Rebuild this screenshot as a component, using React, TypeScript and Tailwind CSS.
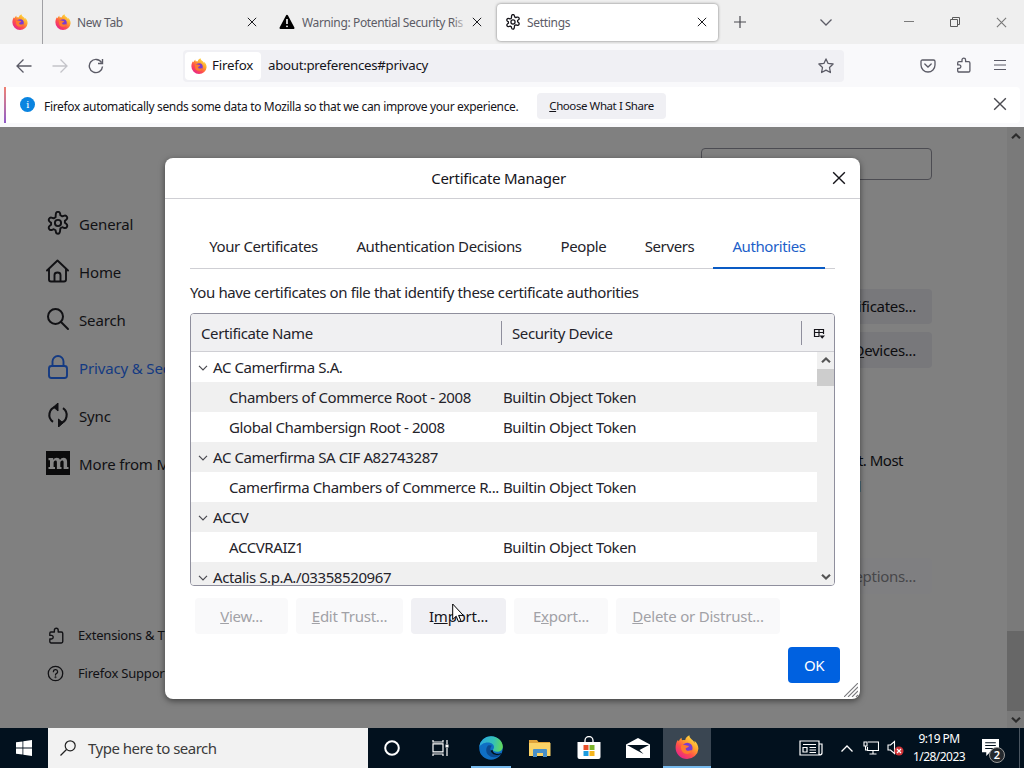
import type { ReactNode } from 'react';

type IconProps = { className?: string };

function FirefoxLogo({ className = 'size-4' }: IconProps) {
  return (
    <svg viewBox="0 0 24 24" className={className}>
      <defs>
        <linearGradient id="ff-body" x1="0.85" y1="0.1" x2="0.2" y2="0.95">
          <stop offset="0" stopColor="#ffe14a" />
          <stop offset="0.35" stopColor="#ffa02b" />
          <stop offset="0.65" stopColor="#ff4f4b" />
          <stop offset="1" stopColor="#e6238c" />
        </linearGradient>
      </defs>
      <path
        d="M2.6 5.2c.4-.1.9.4 1.3 1 .5-1.600 1.700-3 2.800-3.500-.3.900-.1 1.800.4 2.500 1-.3 2-.3 3 0C10.800 2.500 12.500.900 14.500.300c-.2 1.500.5 2.700 2 3.900 1.800 1.200 2.800 2.500 3.300 4-.1-1-.2-1.700-.5-2.500 2.500 1.800 4.100 4.900 4.100 8A11.400 10.900 0 0 1 12 24 11.400 11.400 0 0 1 .6 12.700c0-2.800.7-5.500 2-7.500z"
        fill="url(#ff-body)"
      />
      <circle cx="12.300" cy="13" r="5.300" fill="#7a3bd0" />
      <path
        d="M6 10.500c1.500-1 3.500-1 5-.2 1 .5 2.200.4 3 .6-.4 1.400-1.900 1.500-2.900 2.200-.8.600-.3 2.300 1.300 2.600 1.900.4 3.200-1 5-.1-1 2.300-3.200 3.500-5.300 3.500A6.200 6.200 0 0 1 6 13z"
        fill="#ff7a2e"
      />
    </svg>
  );
}

function GearIcon({ className = 'size-6' }: IconProps) {
  return (
    <svg viewBox="0 0 24 24" className={className} fill="none" stroke="currentColor" strokeWidth="1.900" strokeLinejoin="round">
      <path d="M9.800 3.200Q10 1 12 1t2.200 2.200l.2 1.300 1.900 1.100 1.500-.6q2.100-.8 3.100.9t-.7 3.100l-1.300 1v2.000l1.300 1q1.700 1.400.7 3.100t-3.100.9l-1.500-.6-1.900 1.100-.2 1.300Q14 23 12 23t-2.200-2.200l-.2-1.300-1.900-1.100-1.500.6q-2.100.8-3.100-.9t.7-3.100l1.300-1v-2.000l-1.300-1Q2.100 9.600 3.100 7.900t3.100-.9l1.500.6 1.900-1.100z" transform="translate(0 -.2)" />
      <circle cx="12" cy="12" r="3.100" />
    </svg>
  );
}

function HomeIcon({ className = 'size-6' }: IconProps) {
  return (
    <svg viewBox="0 0 24 24" className={className} fill="none" stroke="currentColor" strokeWidth="1.900" strokeLinecap="round" strokeLinejoin="round">
      <path d="M1 11.500 11.500 1.500 22 11.500" />
      <path d="M3 10v10.500q0 2 2 2h13q2 0 2-2V10" />
      <path d="M8.500 22v-6q0-2.500 3-2.500t3 2.500v6" />
    </svg>
  );
}

function SearchIcon({ className = 'size-6' }: IconProps) {
  return (
    <svg viewBox="0 0 24 24" className={className} fill="none" stroke="currentColor" strokeWidth="2" strokeLinecap="round">
      <circle cx="9.500" cy="9.500" r="7.500" />
      <path d="m15 15 7 7" />
    </svg>
  );
}

function LockIcon({ className = 'size-6' }: IconProps) {
  return (
    <svg viewBox="0 0 24 24" className={className} fill="none" stroke="currentColor" strokeWidth="1.900">
      <rect x="3" y="11" width="18" height="12" rx="2.500" />
      <path d="M6.500 11V6.500a5.500 5.500 0 0 1 11 0V11" />
    </svg>
  );
}

function SyncIcon({ className = 'size-6' }: IconProps) {
  return (
    <svg viewBox="0 0 24 24" className={className}>
      <path d="M10 3.800a8.300 8.300 0 0 0-3 15M14 20.200a8.300 8.300 0 0 0 3-15" fill="none" stroke="currentColor" strokeWidth="2.100" />
      <path d="M12 0v8L7.500 4zM12.500 24v-8l4.500 4z" fill="currentColor" stroke="currentColor" strokeLinejoin="round" />
    </svg>
  );
}

function MozillaIcon({ className = 'size-6' }: IconProps) {
  return (
    <svg viewBox="0 0 24 24" className={className}>
      <path d="M0 0h24v24H0z" fill="#0b0b0c" />
      <path
        d="M2.500 7h4.700v2C8 7.500 9.200 6.700 10.800 6.700c1.700 0 2.800.8 3.200 2.300.8-1.500 2-2.300 3.500-2.300 2.400 0 3.600 1.400 3.600 4v5.200h1.400V18h-4.900v-6.600c0-1.400-.4-2-1.400-2-1.200 0-1.900 1-1.900 2.600v3.900h1.200V18h-4.600v-6.600c0-1.400-.4-2-1.400-2-1.200 0-1.900 1-1.900 2.600v3.900H9V18H2.500v-2.100H4V9.200H2.500z"
        fill="#858585"
      />
    </svg>
  );
}

function PuzzleIcon({ className = 'size-4' }: IconProps) {
  return (
    <svg viewBox="0 0 16 16" className={className} fill="none" stroke="currentColor" strokeWidth="1.300" strokeLinejoin="round">
      <path d="M2.700 4.700H6V3a1.800 1.800 0 0 1 3.600 0v1.700h3q1.300 0 1.300 1.300v7.700q0 1.300-1.300 1.300H3q-1.300 0-1.300-1.300v-2.400h1.500a1.700 1.700 0 0 0 0-3.400H1.700V6q0-1.300 1-1.300z" />
    </svg>
  );
}

function CloseIcon({ className = 'size-3' }: IconProps) {
  return (
    <svg viewBox="0 0 12 12" className={className} fill="none" stroke="currentColor" strokeWidth="1.200">
      <path d="m1 1 10 10M11 1 1 11" />
    </svg>
  );
}

function ScrollArrow({ up = false, className = 'w-2.5 h-1.5' }: IconProps & { up?: boolean }) {
  return (
    <svg viewBox="0 0 10 6" className={className} fill="none" stroke="currentColor" strokeWidth="2.200">
      <path d={up ? 'M1 5.200 5 1.500l4 3.700' : 'M1 .8 5 4.500 9 .8'} />
    </svg>
  );
}

function TabStrip() {
  return (
    <div className="flex h-11 shrink-0 items-center bg-[#efefef] text-[12px] tracking-[-0.3px] text-[#5c5c66]">
      <div className="flex h-full w-[43px] items-center border-r border-[#a0a0a4] pl-3">
        <FirefoxLogo />
      </div>
      <div className="flex w-[226px] items-center pl-3">
        <FirefoxLogo />
        <span className="ml-1.5 flex-1 pt-0.5">New Tab</span>
        <CloseIcon className="mr-[12px] size-[10px] text-[#1c1c20]" />
      </div>
      <div className="flex w-[228px] items-center pl-[10px]">
        <svg viewBox="0 0 16 16" className="size-4 shrink-0">
          <path d="M8 1.800 14.500 14h-13z" fill="#000" stroke="#000" strokeWidth="2" strokeLinejoin="round" />
          <path d="M8 5v5" stroke="#fff" strokeWidth="1.600" />
          <circle cx="8" cy="12.300" r="0.900" fill="#fff" />
        </svg>
        <div className="relative ml-[7px] w-[166px] pt-0.5 tracking-[-0.36px] whitespace-nowrap">
          Warning: Potential Security Ris
          <div className="absolute inset-y-0 right-0 w-4 bg-linear-to-r from-transparent to-[#efefef]" />
        </div>
        <CloseIcon className="ml-1 size-[10px] shrink-0 text-[#1c1c20]" />
      </div>
      <div className="flex h-[37px] w-[221px] items-center rounded-sm bg-white pl-2 shadow-[0_0_3px_rgba(0,0,0,0.5)]">
        <GearIcon className="size-4 text-[#15141a]" />
        <span className="ml-1.5 flex-1 pt-0.5">Settings</span>
        <CloseIcon className="mr-[11px] size-[10px] text-[#1c1c20]" />
      </div>
      <svg viewBox="0 0 12 12" className="ml-4 size-3 text-[#4a4a50]" fill="none" stroke="currentColor">
        <path d="M6 0v12M0 6h12" strokeWidth="1.200" />
      </svg>
      <svg viewBox="0 0 12 7" className="ml-[74px] h-[7px] w-3 text-[#5c5c66]" fill="none" stroke="currentColor">
        <path d="m.500.500 5.500 5.500L11.500.500" strokeWidth="1.300" />
      </svg>
      <svg viewBox="0 0 10 10" className="ml-[72px] size-[10px] text-[#7a7a7a]" fill="none" stroke="currentColor">
        <path d="M0 4.500h10" />
      </svg>
      <svg viewBox="0 0 10 10" className="ml-9 size-[10px] text-[#5a5a5a]" fill="none" stroke="currentColor">
        <path d="M.5 2.500h7v7h-7zM2.500 2.500v-2h7v7h-2" />
      </svg>
      <CloseIcon className="ml-9 size-[11px] text-[#777]" />
    </div>
  );
}

function NavBar() {
  return (
    <div className="flex h-[43px] shrink-0 items-center bg-[#f9f9fb] text-[#5b5b66]">
      <svg viewBox="0 0 16 14" className="ml-4 h-[14px] w-4" fill="none" stroke="currentColor" strokeWidth="1.300">
        <path d="M15.500 7H1M7.500.500 1 7l6.500 6.500" />
      </svg>
      <svg viewBox="0 0 16 14" className="ml-5 h-[14px] w-4 text-[#c4c4c9]" fill="none" stroke="currentColor" strokeWidth="1.300">
        <path d="M.5 7H15M8.500.500 15 7l-6.500 6.500" />
      </svg>
      <svg viewBox="0 0 16 16" className="ml-5 size-4" fill="none" stroke="currentColor" strokeWidth="1.400">
        <path d="M13.500 4.500a6.600 6.600 0 1 0 1 4M14.500 1v4.500H10" />
      </svg>
      <div className="ml-[79px] flex h-8 w-[661px] items-center rounded-sm bg-[#f0f0f4] text-[13.300px] tracking-[-0.3px] text-[#15141a]">
        <div className="ml-0.5 flex h-7 w-[76px] items-center rounded-sm bg-white pl-1.5">
          <FirefoxLogo />
          <span className="ml-[5px] tracking-[-0.2px]">Firefox</span>
        </div>
        <span className="ml-[7px] flex-1">about:preferences#privacy</span>
        <svg viewBox="0 0 16 16" className="mr-2.5 size-4 text-[#5b5b66]" fill="none" stroke="currentColor" strokeWidth="1.300" strokeLinejoin="round">
          <path d="m8 .9 2.100 4.500 5 .6-3.600 3.500.9 5L8 12.100l-4.400 2.400.9-5L.9 6l5-.6z" />
        </svg>
      </div>
      <svg viewBox="0 0 16 14" className="ml-[76px] h-[14px] w-4" fill="none" stroke="currentColor" strokeWidth="1.300" strokeLinecap="round">
        <path d="M2.500 1h11q1.500 0 1.500 1.500V6a7 7 0 0 1-14 0V2.500Q1 1 2.500 1z" />
        <path d="m4.800 5 3.200 3 3.200-3" />
      </svg>
      <PuzzleIcon className="mb-0.5 ml-5 size-4" />
      <svg viewBox="0 0 12 12" className="mb-0.5 ml-[22px] size-3" fill="none" stroke="currentColor" strokeWidth="1.200">
        <path d="M0 1.500h12M0 6h12M0 10.500h12" />
      </svg>
    </div>
  );
}

function InfoBar() {
  return (
    <div className="flex h-10 shrink-0 bg-[#f9f9fb] px-1 pb-1">
      <div className="w-0.5 bg-linear-to-b from-[#f08070] to-[#9059c8]" />
      <div className="flex flex-1 items-center rounded-r-sm bg-white text-[12px] tracking-[-0.34px] text-[#15141a]">
        <div className="mb-0.5 ml-3.5 flex size-[15px] items-center justify-center rounded-full bg-[#0a84e0] font-serif text-[11px] leading-none text-white">
          i
        </div>
        <span className="ml-[9px] w-[493px] pt-[3px] whitespace-nowrap">
          Firefox automatically sends some data to Mozilla so that we can improve your experience.
        </span>
        <div className="mt-px flex h-[26px] w-[129px] items-center justify-center rounded-sm bg-[#f0f0f4] text-[11.500px] tracking-[-0.42px]">
          <span className="underline">C</span>hoose What I Share
        </div>
        <CloseIcon className="mr-[13px] mb-0.5 ml-auto size-[14px] text-[#4a4a50]" />
      </div>
    </div>
  );
}

const categories = [
  { label: 'General', icon: <GearIcon /> },
  { label: 'Home', icon: <HomeIcon /> },
  { label: 'Search', icon: <SearchIcon /> },
  { label: 'Privacy & Security', icon: <LockIcon />, active: true },
  { label: 'Sync', icon: <SyncIcon /> },
  { label: 'More from Mozilla', icon: <MozillaIcon /> },
];

function Sidebar() {
  return (
    <div className="flex w-[300px] flex-col pl-[46px] pt-[72px] text-[#111114]">
      {categories.map((c) => (
        <div
          key={c.label}
          className={`flex h-12 items-center gap-[9px] whitespace-nowrap text-[15px] tracking-[-0.15px] ${c.active ? 'text-[#143a82]' : ''}`}
        >
          {c.icon}
          <span className="pt-0.5">{c.label}</span>
        </div>
      ))}
      <div className="mt-[129px] flex h-[38px] items-center gap-[13px] pl-0.5 text-[13px] tracking-[-0.2px] whitespace-nowrap">
        <PuzzleIcon className="size-[17px]" />
        <span className="pt-0.5">Extensions &amp; Themes</span>
      </div>
      <div className="flex h-[38px] items-center gap-[13px] pl-px text-[13px] tracking-[-0.2px] whitespace-nowrap">
        <svg viewBox="0 0 16 16" className="size-[17px]" fill="none" stroke="currentColor" strokeWidth="1.200" strokeLinecap="round">
          <circle cx="8" cy="8" r="6.800" />
          <path d="M6 6.300a2 2 0 1 1 2.800 1.800q-.8.400-.8 1.400" />
          <circle cx="8" cy="11.600" r="0.300" />
        </svg>
        <span className="ml-px pt-0.5">Firefox Support</span>
      </div>
    </div>
  );
}

function PreferencesPane() {
  return (
    <div className="flex flex-1 flex-col items-end pr-[75px] pt-[21px] text-[15px] tracking-[-0.3px] text-[#0c0c0f]">
      <div className="h-8 w-[231px] rounded-sm border border-[#4c4c52]" />
      <div className="mt-[109px] flex h-[35px] items-center rounded-sm bg-[#78787b] px-4">View Certificates...</div>
      <div className="mt-2 flex h-9 items-center rounded-sm bg-[#78787b] px-4">
        <span>
          Security <u>D</u>evices...
        </span>
      </div>
      <div className="mt-[79px] mr-[29px] h-[26px] leading-[26px] tracking-[-0.5px]">t. Most</div>
      <div className="mr-[71px] h-[26px] leading-[26px]">l</div>
      <div className="mt-[59px] flex h-9 items-center rounded-sm bg-[#7f7f81] px-4 text-[#47474a]">Exceptions...</div>
    </div>
  );
}

const tabs = [
  { label: 'Your Certificates', width: 'w-[147px]' },
  { label: 'Authentication Decisions', width: 'w-[204px]' },
  { label: 'People', width: 'w-[85px]' },
  { label: 'Servers', width: 'w-[87px]' },
  { label: 'Authorities', width: 'w-[112px]', active: true },
];

type CertRow = { name: string; device?: string };

const rows: CertRow[] = [
  { name: 'AC Camerfirma S.A.' },
  { name: 'Chambers of Commerce Root - 2008', device: 'Builtin Object Token' },
  { name: 'Global Chambersign Root - 2008', device: 'Builtin Object Token' },
  { name: 'AC Camerfirma SA CIF A82743287' },
  { name: 'Camerfirma Chambers of Commerce R...', device: 'Builtin Object Token' },
  { name: 'ACCV' },
  { name: 'ACCVRAIZ1', device: 'Builtin Object Token' },
  { name: 'Actalis S.p.A./03358520967' },
];

function CertTree() {
  return (
    <div className="mt-2.5 flex h-[273px] w-[645px] flex-col overflow-hidden rounded-sm border border-[#8f8f9d]">
      <div className="flex h-[38px] shrink-0 items-center border-b border-[#cfcfd4] bg-[#f0f0f2]">
        <div className="flex h-6 w-[311px] items-center border-r border-[#8f8f9d] pt-0.5 pl-2.5">Certificate Name</div>
        <div className="flex h-6 w-[300px] items-center border-r border-[#8f8f9d] pt-0.5 pl-2.5">Security Device</div>
        <svg viewBox="0 0 12 12" className="mt-0.5 ml-[11px] size-3" fill="none" stroke="#15141a" strokeWidth="1.200">
          <path d="M6.500 8.500h-5v-7h9v4.500M1 4.500h10M6 1.500v7" />
          <path d="M6.500 7.500h5.500L9.200 10.800z" fill="#15141a" stroke="none" />
        </svg>
      </div>
      <div className="flex min-h-0 flex-1">
        <div className="w-[626px] overflow-hidden">
          {rows.map((row, i) => (
            <div key={row.name} className={`flex h-[30px] items-center whitespace-nowrap ${i % 2 ? 'bg-[#f0f0f0]' : 'bg-white'}`}>
              {row.device ? (
                <>
                  <span className="w-[312px] pl-[38px]">{row.name}</span>
                  <span>{row.device}</span>
                </>
              ) : (
                <>
                  <svg viewBox="0 0 10 6" className="mt-0.5 mr-[5px] ml-[7px] h-1.5 w-2.5" fill="none" stroke="#4a4a50" strokeWidth="1.200">
                    <path d="m1 .800 4 4 4-4" />
                  </svg>
                  {row.name}
                </>
              )}
            </div>
          ))}
        </div>
        <div className="flex flex-1 flex-col items-center bg-[#f0f0f0] text-[#555]">
          <div className="flex h-[17px] items-center pb-0.5">
            <ScrollArrow up />
          </div>
          <div className="h-[17px] w-full bg-[#cdcdcd]" />
          <div className="mt-auto flex h-[17px] items-center">
            <ScrollArrow />
          </div>
        </div>
      </div>
    </div>
  );
}

function ActionButton({ className, enabled = false, children }: { className: string; enabled?: boolean; children: ReactNode }) {
  return (
    <div
      className={`flex h-9 items-center justify-center rounded-sm ${className} ${enabled ? 'bg-[#f0f0f4] text-[#15141a]' : 'bg-[#f9f9fa] text-[#a1a1a6]'}`}
    >
      <span>{children}</span>
    </div>
  );
}

function CertificateManager() {
  return (
    <div className="absolute top-[31px] left-[165px] flex h-[541px] w-[695px] flex-col rounded-lg bg-white text-[15px] tracking-[-0.4px] text-[#24232a] shadow-[0_2px_6px_rgba(0,0,0,0.5)]">
      <div className="flex h-[41px] shrink-0 items-center border-b border-[#cfcfd4] pr-3.5">
        <span className="flex-1 text-center tracking-[-0.25px] text-[#15141a]">Certificate Manager</span>
        <CloseIcon className="size-[14px] text-[#15141a]" />
      </div>
      <div className="flex flex-col px-[25px]">
        <div className="mt-[26px] flex h-11 border-b border-[#cfcfd4]">
          {tabs.map((tab) => (
            <div
              key={tab.label}
              className={`flex items-center justify-center whitespace-nowrap ${tab.width} ${tab.active ? '-mb-px border-b-2 border-[#0a5bc4] text-[#1d5fc9]' : ''}`}
            >
              {tab.label}
            </div>
          ))}
        </div>
        <div className="mt-[13px] h-[21px] leading-[21px] whitespace-nowrap">
          You have certificates on file that identify these certificate authorities
        </div>
        <CertTree />
        <div className="mt-3 flex gap-2 pl-[5px] tracking-[-0.23px]">
          <ActionButton className="w-[93px]">
            <u>V</u>iew...
          </ActionButton>
          <ActionButton className="w-[107px]">
            <u>E</u>dit Trust...
          </ActionButton>
          <ActionButton className="w-[95px]" enabled>
            I<u>m</u>port...
          </ActionButton>
          <ActionButton className="w-[94px]">
            E<u>x</u>port...
          </ActionButton>
          <ActionButton className="w-[164px]">
            <u>D</u>elete or Distrust...
          </ActionButton>
        </div>
        <div className="mt-[13px] mr-[-5px] flex h-9 w-[52px] items-center justify-center self-end rounded-sm bg-[#0061e0] text-white">
          OK
        </div>
      </div>
      <svg viewBox="0 0 14 14" className="absolute right-0.5 bottom-0.5 size-3.5" stroke="#7a7a7e" strokeWidth="1.100">
        <path d="M0 14 14 0M4 14 14 4M8 14l6-6M12 14l2-2" />
      </svg>
      <svg viewBox="0 0 12 20" className="absolute top-[445px] left-[287px] h-5 w-3" fill="#fff" stroke="#000">
        <path d="M.700 1v15.500l3.500-3.300 2.300 5.500 2.400-1-2.300-5.300h4.700z" />
      </svg>
    </div>
  );
}

function Taskbar() {
  return (
    <div className="flex h-10 shrink-0 items-center bg-[#02111e] text-white">
      <div className="flex w-12 justify-center">
        <svg viewBox="0 0 16 16" className="size-4" fill="#fff">
          <path d="M0 2.300 6.500 1.400v6.200H0zM7.300 1.300 16 0v7.600H7.300zM0 8.400h6.500v6.200L0 13.700zM7.300 8.400H16V16l-8.700-1.300z" />
        </svg>
      </div>
      <div className="flex h-full w-80 items-center bg-[#f2f2f2] pl-3 text-[15px] tracking-[-0.5px] text-[#3b3b3b]">
        <svg viewBox="0 0 16 16" className="mr-3 size-4" fill="none" stroke="#222" strokeWidth="1.200">
          <circle cx="10.200" cy="5.800" r="5" />
          <path d="M6.500 9.500.5 15.500" />
        </svg>
        Type here to search
      </div>
      <div className="flex w-12 justify-center">
        <svg viewBox="0 0 16 16" className="size-4" fill="none" stroke="#fff" strokeWidth="2">
          <circle cx="8" cy="8" r="6.800" />
        </svg>
      </div>
      <div className="flex w-[47px] justify-center pl-px">
        <svg viewBox="0 0 17 16" className="h-4 w-[17px]" fill="none" stroke="#fff" strokeWidth="1.200">
          <path d="M1 3.800h10v8H1zM1 0v2h10V0M1 16v-2h10v2M15 0v4M15 8v8" />
          <path d="M13.500 4.500h3v3h-3z" fill="#fff" stroke="none" />
        </svg>
      </div>
      <div className="flex h-full w-14 items-center justify-center">
        <div className="flex h-full w-10 items-center justify-center border-b-2 border-[#76b9ed] pt-0.5">
          <svg viewBox="0 0 24 24" className="size-6">
            <defs>
              <linearGradient id="edge-top" x1="0" y1="0.4" x2="1" y2="0.500">
                <stop offset="0" stopColor="#2aa8e0" />
                <stop offset="0.600" stopColor="#35c1b5" />
                <stop offset="1" stopColor="#63d957" />
              </linearGradient>
            </defs>
            <circle cx="12" cy="12" r="11.800" fill="#0f6fc4" />
            <path d="M.3 11A11.800 11.800 0 0 1 12 .2C19 .2 23.800 5.300 23.800 10.400c0 3.500-2.700 5.300-5.600 5.300-3 0-4.400-1-4.200-1.700.3-.8 1-1.300 1-2.900 0-2.300-2.500-4.500-6-4.500C4.500 6.600 1.500 9 .3 11z" fill="url(#edge-top)" />
            <path d="M9 9.500c-3.500 3.500-2 11 5.500 11.800 3 .3 5.500-1 7.300-3-4 1.500-9.300.5-10.300-4-.4-2 .3-3.500 1.500-4.500-1-.7-2.500-.8-4-.300z" fill="#0b4a8f" />
            <path d="M13.800 14c-.5 1.200 1 3.800 5 3.800 1.500 0 3-.4 4-1l-1 1.800c-4 1.200-9.300.2-10.300-4z" fill="#02111e" />
          </svg>
        </div>
      </div>
      <div className="flex w-[42px] justify-center">
        <svg viewBox="0 0 22 20" className="h-5 w-[22px]">
          <path d="M0 2h8l1.500 2H21v14H0z" fill="#e0a33a" />
          <path d="M0 5h21.500v13H0z" fill="#fbd367" />
          <path d="M4 19v-7q0-1 1-1h12q1 0 1 1v7h-4v-4H8v4z" fill="#4a90c8" />
        </svg>
      </div>
      <div className="flex w-[55px] justify-center">
        <svg viewBox="0 0 24 24" className="size-6">
          <path d="M8 6V4.500a4 4 0 0 1 8 0V6" fill="none" stroke="#fff" strokeWidth="1.300" />
          <path d="M.5 6h23v15q0 2-2 2h-19q-2 0-2-2z" fill="#fff" />
          <path d="M6.500 9h5v5h-5z" fill="#e8502b" />
          <path d="M12.500 9h5v5h-5z" fill="#7db52b" />
          <path d="M6.500 15h5v5h-5z" fill="#1c9ce0" />
          <path d="M12.500 15h5v5h-5z" fill="#f5b51d" />
        </svg>
      </div>
      <div className="mr-[3px] flex w-11 justify-center">
        <svg viewBox="0 0 24 20" className="h-5 w-6">
          <path d="M0 6.500 12 0l12 6.500V20H0z" fill="#fff" />
          <path d="M1 7h22l-9.500 5 4 4L11 12.500z" fill="#02111e" />
        </svg>
      </div>
      <div className="flex h-full w-12 items-center justify-center border-b-2 border-[#76b9ed] bg-[#3a4652]">
        <FirefoxLogo className="size-6" />
      </div>
      <svg viewBox="0 0 24 16" className="ml-[88px] h-4 w-6" fill="none" stroke="#fff" strokeWidth="1.200">
        <path d="M1 1h19v14H1zM20 4h3v9q0 2-3 2M4 4.500h13M10.500 7.500H17M10.500 10H17M10.500 12.500H17M4 7.500h4v4.500H4z" />
      </svg>
      <svg viewBox="0 0 12 7" className="ml-[18px] h-[7px] w-3" fill="none" stroke="#fff" strokeWidth="1.300">
        <path d="M.5 6.500 6 1l5.500 5.500" />
      </svg>
      <svg viewBox="0 0 16 14" className="ml-2.5 h-3.5 w-4" fill="none" stroke="#fff" strokeWidth="1.100">
        <path d="M5 1h10.500v8.500h-11V6M10 9.500V13M6.500 13h7M1 1h3v4H1zM2.500 5v4h2" />
      </svg>
      <svg viewBox="0 0 17 16" className="ml-2 h-4 w-[17px]">
        <path d="M1 5h2.500L7.500 1.500v12L3.500 10H1z" fill="none" stroke="#fff" strokeWidth="1.100" />
        <circle cx="12" cy="11" r="4.500" fill="#d13438" />
        <path d="m10 9 4 4M14 9l-4 4" stroke="#fff" strokeWidth="1.200" />
      </svg>
      <div className="ml-[5px] w-[60px] text-center text-[12px] leading-[18px] tracking-[-0.55px] whitespace-nowrap">
        <div>9:19 PM</div>
        <div>1/28/2023</div>
      </div>
      <div className="relative ml-[13px] h-6 w-6">
        <svg viewBox="0 0 16 16" className="mt-[3px] size-[17px]">
          <path d="M0 0h16v12.500H7.500L4 16v-3.500H0z" fill="#fff" />
          <path d="M3 3.500h10M3 6.200h10M3 9h10" stroke="#02111e" />
        </svg>
        <div className="absolute top-[11px] left-[7px] flex size-4 items-center justify-center rounded-full border border-[#9a9a9a] bg-[#24292e] text-[11px] font-semibold">
          2
        </div>
      </div>
      <div className="mr-1 ml-auto h-full w-px bg-[#4a5560]" />
    </div>
  );
}

export default function App() {
  return (
    <div className="flex h-[768px] w-[1024px] flex-col overflow-hidden bg-[#f9f9fb] font-['Noto_Sans','Open_Sans',sans-serif]">
      <TabStrip />
      <NavBar />
      <InfoBar />
      <div className="relative flex h-[601px] shrink-0 overflow-hidden bg-[#808080]">
        <Sidebar />
        <PreferencesPane />
        <div className="flex w-[17px] flex-col items-center bg-[#7a7a7a] text-[#2c2c2c]">
          <div className="flex h-[17px] items-center">
            <ScrollArrow up />
          </div>
          <div className="mt-auto h-20 w-full bg-[#676767]" />
          <div className="flex h-[17px] items-center">
            <ScrollArrow />
          </div>
        </div>
        <CertificateManager />
      </div>
      <Taskbar />
    </div>
  );
}
